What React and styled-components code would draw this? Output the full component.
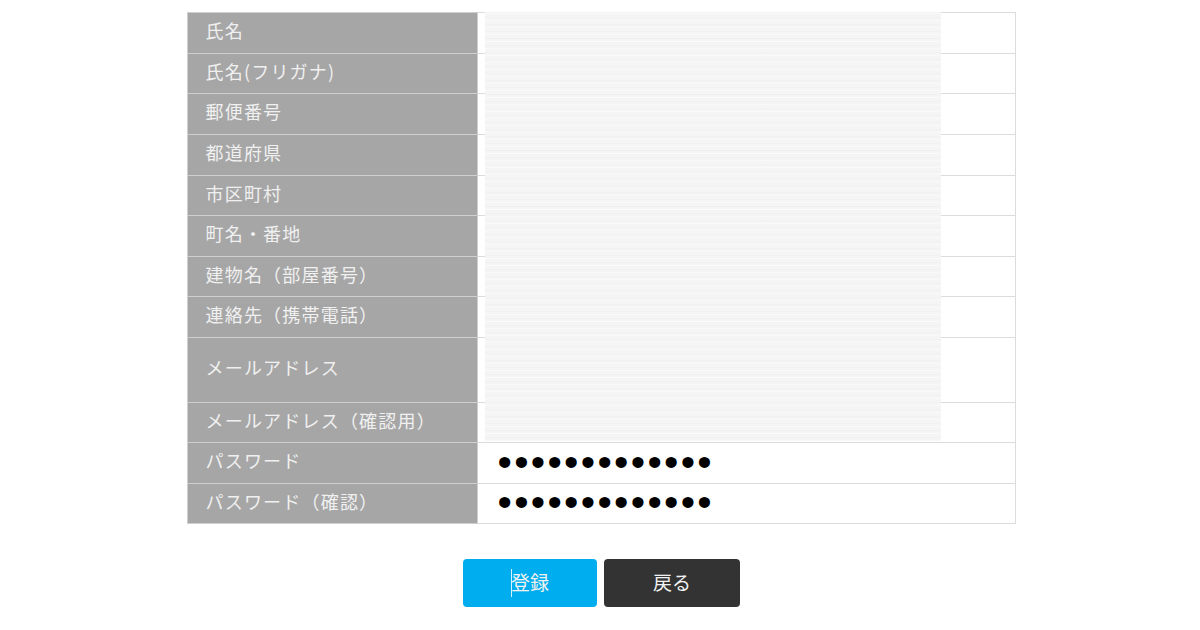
import React from "react";
import styled, { createGlobalStyle } from "styled-components";

const Global = createGlobalStyle`
  html, body { margin: 0; padding: 0; background: #fff; }
  body { font-family: "Noto Sans CJK JP", "Liberation Sans", sans-serif; }
`;
const Page = styled.div`
  width: 1200px; height: 630px; overflow: hidden;
  padding-top: 12px; box-sizing: border-box;
  display: flex; flex-direction: column; align-items: center;
`;
const FormArea = styled.div`
  position: relative; width: 829px; margin-left: 2px;
`;
const Table = styled.table`
  width: 829px; table-layout: fixed; border-collapse: collapse;
`;
const Row = styled.tr`
  height: ${p => p.$h}px;
`;
const Head = styled.th`
  width: 290px; box-sizing: border-box; background: #a6a6a6;
  border: 1px solid #cfcfcf; padding: 0 0 6px 18px; text-align: left;
  font-weight: 400; font-size: 18px; letter-spacing: 1.2px; color: #f0f0f0;
  line-height: 1; white-space: nowrap;
`;
const Cell = styled.td`
  border: 1px solid #dcdcdc; padding: 0 0 2px 20px; background: #fff;
`;
const Secret = styled.input`
  display: block; width: 300px; height: 30px; padding: 0; border: 0; outline: 0; background: none;
  font-family: "Liberation Sans", sans-serif; font-size: 41px; letter-spacing: 2.3px; color: #000;
`;
const Mask = styled.div`
  position: absolute; left: 298px; top: 0; width: 456px; height: 429px;
  background-color: #f5f5f5;
  background-image:
    repeating-linear-gradient(0deg, rgba(255,255,255,.4) 0 1px, transparent 1px 3px, rgba(232,232,232,.3) 3px 4px, transparent 4px 7px);
`;
const Actions = styled.div`
  display: flex; gap: 7px; margin-top: 35px; margin-left: 3px;
`;
const Button = styled.button`
  position: relative; width: ${p => p.$w}px; height: 48px; padding: 0 0 4px; border: 0; border-radius: 4px;
  background: ${p => p.$bg}; color: #f2f2f2; font-family: inherit; font-size: 19px; line-height: 1;
`;
const Caret = styled.span`
  position: absolute; left: 48px; top: 10px; width: 1px; height: 28px; background: #d5f0fb;
`;

const rows = [
  ["氏名", 41], ["氏名(フリガナ)", 40], ["郵便番号", 41], ["都道府県", 41], ["市区町村", 40],
  ["町名・番地", 41], ["建物名（部屋番号）", 40], ["連絡先（携帯電話）", 41], ["メールアドレス", 65],
  ["メールアドレス（確認用）", 40],
];
const pw = ["パスワード", "パスワード（確認）"];

export default function App() {
  return (
    <Page>
      <Global />
      <FormArea>
        <Table>
          <tbody>
            {rows.map(([label, h]) => (
              <Row key={label} $h={h}><Head>{label}</Head><Cell /></Row>
            ))}
            {pw.map((label, i) => (
              <Row key={label} $h={i ? 40 : 41}>
                <Head>{label}</Head>
                <Cell><Secret type="password" readOnly value="1234567890123" /></Cell>
              </Row>
            ))}
          </tbody>
        </Table>
        <Mask />
      </FormArea>
      <Actions>
        <Button $w={134} $bg="#00adee"><Caret />登録</Button>
        <Button $w={136} $bg="#333333">戻る</Button>
      </Actions>
    </Page>
  );
}
